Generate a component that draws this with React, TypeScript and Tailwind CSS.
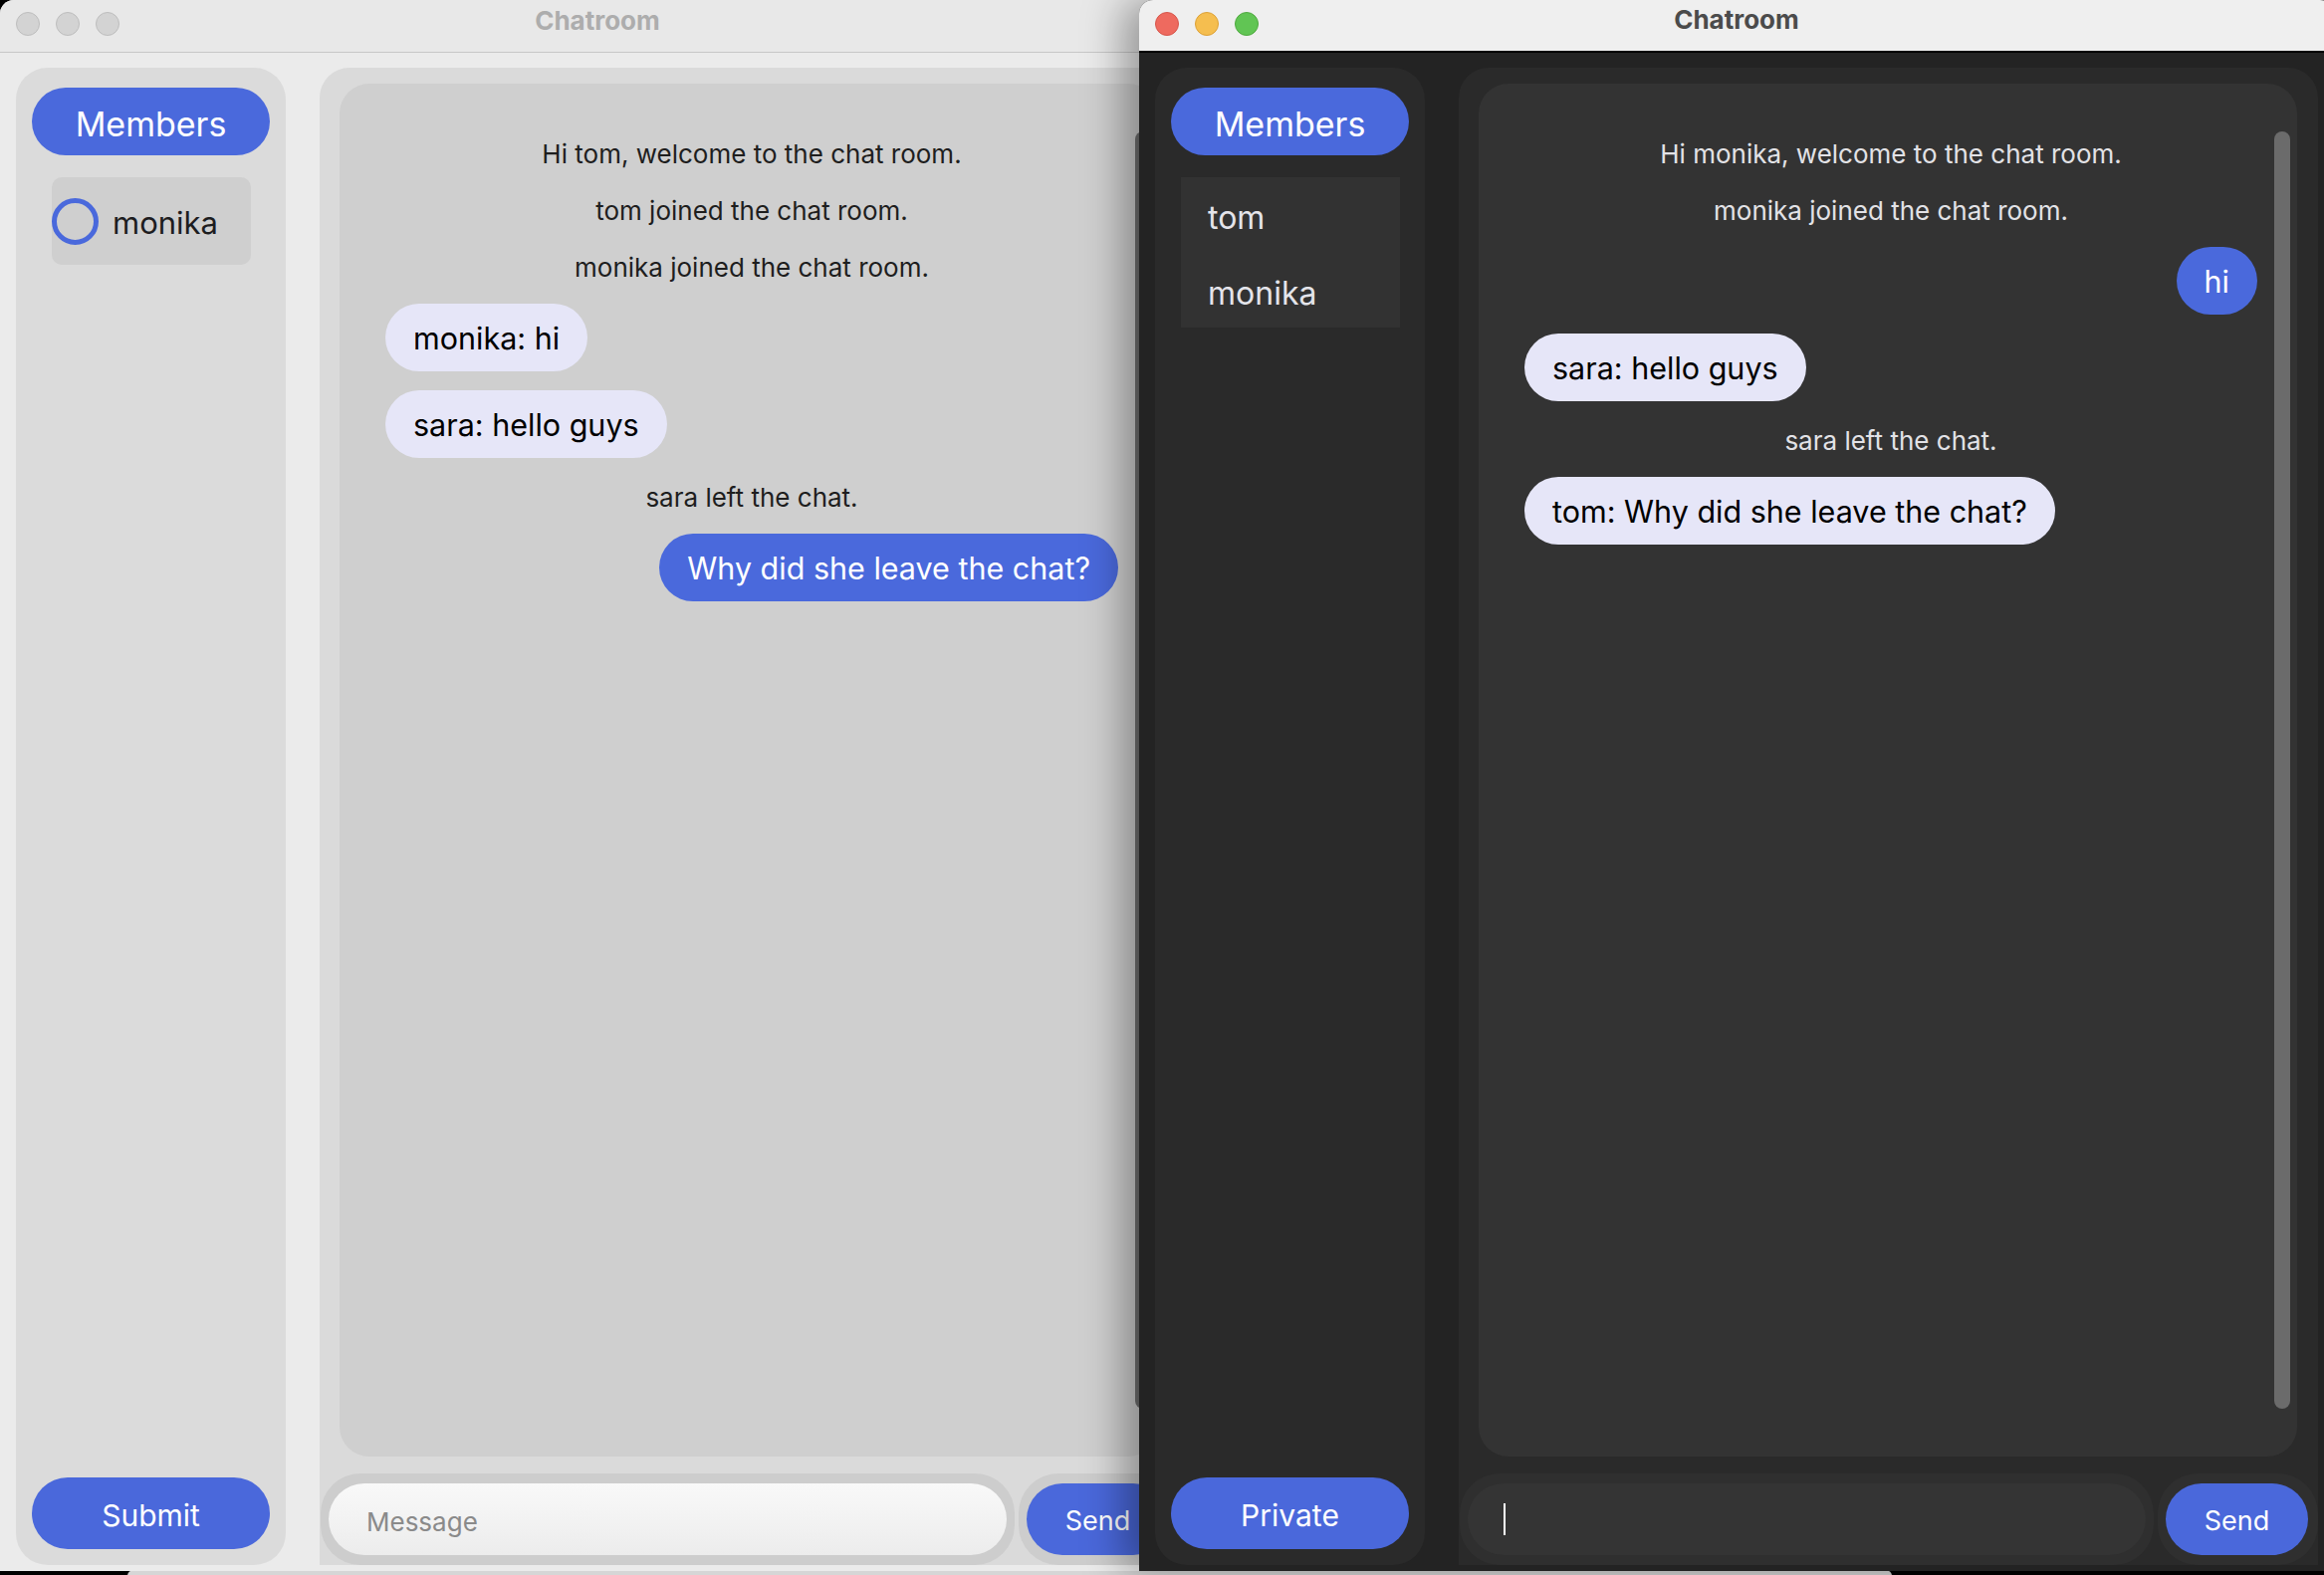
import React from 'react';

type Msg = { kind: 'system' | 'in' | 'out'; text: string };

interface ChatWindowProps {
  dark: boolean;
  messages: Msg[];
  members: React.ReactNode;
  actionLabel: string;
  className: string;
}

const lightMessages: Msg[] = [
  { kind: 'system', text: 'Hi tom, welcome to the chat room.' },
  { kind: 'system', text: 'tom joined the chat room.' },
  { kind: 'system', text: 'monika joined the chat room.' },
  { kind: 'in', text: 'monika: hi' },
  { kind: 'in', text: 'sara: hello guys' },
  { kind: 'system', text: 'sara left the chat.' },
  { kind: 'out', text: 'Why did she leave the chat?' },
];

const darkMessages: Msg[] = [
  { kind: 'system', text: 'Hi monika, welcome to the chat room.' },
  { kind: 'system', text: 'monika joined the chat room.' },
  { kind: 'out', text: 'hi' },
  { kind: 'in', text: 'sara: hello guys' },
  { kind: 'system', text: 'sara left the chat.' },
  { kind: 'in', text: 'tom: Why did she leave the chat?' },
];

const TrafficLights = ({ active }: { active: boolean }) => {
  const lights = active
    ? ['bg-[#ee6a5f] border-[#d6564b]', 'bg-[#f5be4f] border-[#dca137]', 'bg-[#61c554] border-[#4fa93f]']
    : ['bg-[#d3d3d3] border-[#bdbdbd]', 'bg-[#d3d3d3] border-[#bdbdbd]', 'bg-[#d3d3d3] border-[#bdbdbd]'];
  return (
    <div className="flex items-center gap-4 pl-4 pb-1">
      {lights.map((c, i) => (
        <span key={i} className={`block size-6 rounded-full border ${c}`} />
      ))}
    </div>
  );
};

const ChatWindow: React.FC<ChatWindowProps> = ({ dark, messages, members, actionLabel, className }) => {
  return (
    <div
      className={`absolute top-0 flex h-[1578px] w-[1200px] flex-col overflow-hidden rounded-t-[14px] font-[Inter,sans-serif] ${
        dark ? 'bg-[#232323]' : 'bg-[#ebebeb]'
      } ${className}`}
    >
      {/* title bar */}
      <div
        className={`grid h-[53px] shrink-0 grid-cols-[1fr_auto_1fr] items-center ${
          dark ? 'border-b-2 border-black bg-[#efefef]' : 'border-b border-[#c8c8c8] bg-[#e8e8e8]'
        }`}
      >
        <TrafficLights active={dark} />
        <div className={`pb-3 text-[26px] font-bold ${dark ? 'text-[#4b4b4b]' : 'text-[#adadad]'}`}>Chatroom</div>
        <div />
      </div>

      <div className="flex min-h-0 flex-1 gap-[34px] px-4 pt-[15px] pb-[6px]">
        {/* sidebar */}
        <div
          className={`flex w-[271px] shrink-0 flex-col rounded-[32px] px-4 pt-5 pb-4 ${
            dark ? 'bg-[#2a2a2a]' : 'bg-[#dbdbdb]'
          }`}
        >
          <button className="flex h-[68px] w-full items-center justify-center rounded-full bg-[#4a69dc] pt-1 text-[34px] text-white">
            Members
          </button>
          {members}
          <button className="mt-auto flex h-[72px] w-full items-center justify-center rounded-full bg-[#4a68db] pt-1 text-[30px] text-white">
            {actionLabel}
          </button>
        </div>

        {/* chat */}
        <div className={`flex min-w-0 flex-1 flex-col rounded-t-[30px] pt-4 ${dark ? 'bg-[#2a2a2a]' : 'bg-[#dadada]'}`}>
          <div className={`relative ml-5 mr-[21px] min-h-0 flex-1 rounded-[30px] ${dark ? 'bg-[#333333]' : 'bg-[#cfcfcf]'}`}>
            <div className="flex flex-col gap-[19px] pt-[50px] pl-[46px] pr-[40px]">
              {messages.map((m, i) => {
                if (m.kind === 'system') {
                  return (
                    <div
                      key={i}
                      className={`flex h-[38px] items-center justify-center pt-[2px] text-[26px] ${dark ? 'text-[#e2e2e6]' : 'text-[#1e1e1e]'}`}
                    >
                      {m.text}
                    </div>
                  );
                }
                const out = m.kind === 'out';
                return (
                  <div
                    key={i}
                    className={`flex h-[68px] items-center whitespace-nowrap rounded-full px-[28px] pt-[2px] text-[30.5px] ${
                      out ? 'self-end bg-[#4a69dc] text-white' : 'self-start bg-[#e6e6f8] text-black'
                    }`}
                  >
                    {m.text}
                  </div>
                );
              })}
            </div>
            <div
              className={`absolute top-[48px] right-[7px] bottom-[48px] w-4 rounded-full ${dark ? 'bg-[#6b6b6b]' : 'bg-[#707070]'}`}
            />
          </div>

          {/* input row */}
          <div className="mt-[17px] flex h-[92px] shrink-0 gap-1 pl-px">
            <div className={`flex-1 rounded-[40px] px-2 py-[10px] ${dark ? 'bg-[#2f2f2f]' : 'bg-[#cdcdcd]'}`}>
              {dark ? (
                <div className="flex h-full items-center rounded-full bg-[#343434] pl-[36px]">
                  <span className="block h-[32px] w-[2px] bg-white" />
                </div>
              ) : (
                <div className="flex h-full items-center rounded-full bg-gradient-to-b from-[#f9f9f9] to-[#ececec] pl-[38px] pt-1 text-[26px] text-[#8a8a8a]">
                  Message
                </div>
              )}
            </div>
            <div className={`w-[161px] shrink-0 rounded-[40px] px-2 py-[10px] ${dark ? 'bg-[#2f2f2f]' : 'bg-[#cdcdcd]'}`}>
              <button className="flex h-full w-[143px] items-center justify-center rounded-full bg-[#4a68db] pt-1 text-[27px] text-white">
                Send
              </button>
            </div>
          </div>
        </div>
      </div>
    </div>
  );
};

export default function App() {
  const lightMembers = (
    <div className="mt-[22px] ml-5 flex h-[88px] w-[200px] items-center gap-[14px] rounded-[10px] bg-[#cfcfcf]">
      <span className="block size-[47px] rounded-full border-[5px] border-[#4a69dc]" />
      <span className="pt-1 text-[31px] text-[#1d1d1f]">monika</span>
    </div>
  );

  const darkMembers = (
    <div className="mt-[22px] ml-[10px] flex h-[151px] w-[220px] flex-col bg-[#323232] pl-[27px] text-[32px] text-[#e4e4ea]">
      <div className="flex h-[76px] items-center pt-[6px]">tom</div>
      <div className="flex h-[75px] items-center pt-[6px]">monika</div>
    </div>
  );

  return (
    <div className="relative h-[1582px] w-[2334px] overflow-hidden bg-black">
      {/* window edge peeking out behind */}
      <div className="absolute left-[128px] top-[1577px] h-[20px] w-[1772px] rounded-t-[6px] bg-[#d6d6d6]" />

      <ChatWindow
        dark={false}
        messages={lightMessages}
        members={lightMembers}
        actionLabel="Submit"
        className="left-0"
      />
      <ChatWindow
        dark
        messages={darkMessages}
        members={darkMembers}
        actionLabel="Private"
        className="left-[1144px] shadow-[-16px_0_40px_rgba(0,0,0,0.35)]"
      />
    </div>
  );
}
